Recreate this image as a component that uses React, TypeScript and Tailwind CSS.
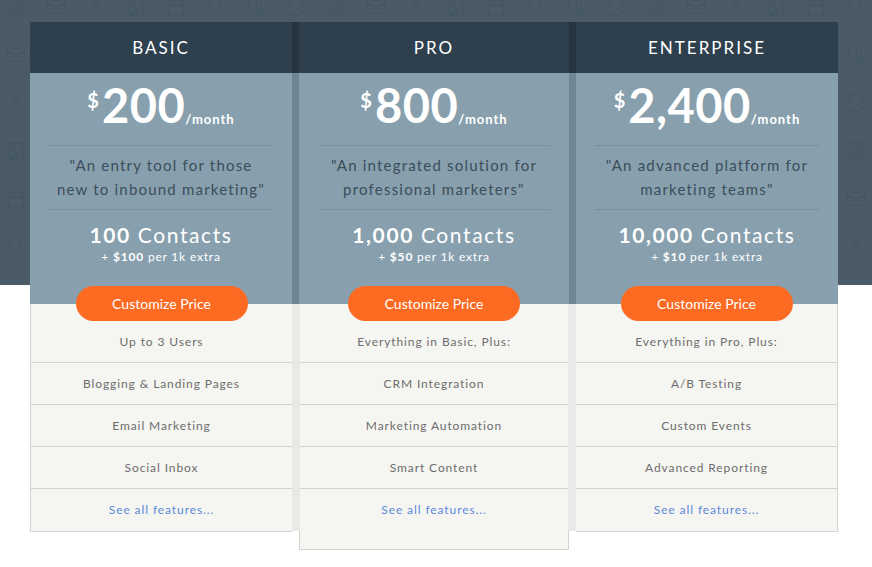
import React from 'react';
import { Mail, Calendar, BarChart3, FileText, User, Search, MessageCircle, Image } from 'lucide-react';

type Plan = {
  name: string;
  price: string;
  quote: [string, string];
  contacts: string;
  extra: string;
  features: string[];
};

const plans: Plan[] = [
  {
    name: 'BASIC',
    price: '200',
    quote: ['"An entry tool for those', 'new to inbound marketing"'],
    contacts: '100',
    extra: '$100',
    features: ['Up to 3 Users', 'Blogging & Landing Pages', 'Email Marketing', 'Social Inbox'],
  },
  {
    name: 'PRO',
    price: '800',
    quote: ['"An integrated solution for', 'professional marketers"'],
    contacts: '1,000',
    extra: '$50',
    features: ['Everything in Basic, Plus:', 'CRM Integration', 'Marketing Automation', 'Smart Content'],
  },
  {
    name: 'ENTERPRISE',
    price: '2,400',
    quote: ['"An advanced platform for', 'marketing teams"'],
    contacts: '10,000',
    extra: '$10',
    features: ['Everything in Pro, Plus:', 'A/B Testing', 'Custom Events', 'Advanced Reporting'],
  },
];

const patternIcons = [FileText, Mail, User, Image, Calendar, Search, BarChart3, MessageCircle];

// faint icon wallpaper behind the cards
const Pattern: React.FC = () => (
  <div className="absolute inset-x-0 top-0 h-[285px] overflow-hidden bg-[#4a5b67]">
    <div className="-mt-[6px] -ml-[4px] grid grid-cols-[repeat(22,40px)] gap-y-[22px]">
      {Array.from({ length: 22 * 7 }).map((_, i) => {
        const Icon = patternIcons[(i + Math.floor(i / 22) * 3) % patternIcons.length];
        return (
          <div key={i} className="flex h-[26px] w-[40px] items-center justify-center">
            <Icon className="h-[20px] w-[20px] text-[#455663]" strokeWidth={1.6} />
          </div>
        );
      })}
    </div>
  </div>
);

const PlanCard: React.FC<{ plan: Plan; featured?: boolean; side: 'left' | 'right' | 'none' }> = ({
  plan,
  featured,
  side,
}) => {
  const border = featured
    ? 'border-x border-b border-[#d2d2ce]'
    : side === 'left'
      ? 'border-l border-b border-[#d2d2ce]'
      : 'border-r border-b border-[#d2d2ce]';

  return (
    <div className={featured ? 'relative z-10 w-[270px]' : 'w-[262px]'}>
      {/* header */}
      <div
        className={`flex h-[51px] items-center justify-center bg-[#2e3f4e] ${
          featured ? 'shadow-[-7px_0_0_#26343f,7px_0_0_#26343f]' : ''
        }`}
      >
        <span className="text-[17px] tracking-[2px] text-white">{plan.name}</span>
      </div>

      {/* price block */}
      <div
        className={`flex h-[231px] flex-col bg-[#88a0ae] px-[19px] ${
          featured ? 'shadow-[-7px_0_0_#6e8594,7px_0_0_#6e8594]' : ''
        }`}
      >
        <div className="flex justify-center pt-[9px] text-white">
          <span className="mt-[8px] mr-[3px] text-[20px] font-bold leading-none">$</span>
          <span className="text-[47px] font-bold leading-none tracking-[0.5px]">{plan.price}</span>
          <span className="mt-[31px] text-[13px] font-bold leading-none tracking-[1px]">/month</span>
        </div>
        <div className="mt-[16px] h-px bg-[#7890a0]" />
        <div className="pt-[7px] pb-[8px] text-center text-[15px] leading-[24px] tracking-[1.2px] text-[#3c4d5a]">
          <div>{plan.quote[0]}</div>
          <div>{plan.quote[1]}</div>
        </div>
        <div className="h-px bg-[#7890a0]" />
        <div className="pt-[13px] text-center text-white">
          <div className="text-[21px] leading-[24px] tracking-[1.6px]">
            <span className="font-bold">{plan.contacts}</span> Contacts
          </div>
          <div className="mt-[3px] text-[12px] leading-[14px] tracking-[0.8px]">
            + <span className="font-bold">{plan.extra}</span> per 1k extra
          </div>
        </div>
      </div>

      {/* features */}
      <div className={`bg-[#f5f5f2] ${border}`}>
        <div className={featured ? 'shadow-[-8px_0_0_#e9e9e7,8px_0_0_#e9e9e7]' : ''}>
          <div className="flex justify-center">
            <button className="-mt-[18px] h-[35px] w-[172px] rounded-full bg-[#fd6a22] text-[14px] text-white">
              Customize Price
            </button>
          </div>
          {plan.features.map((f) => (
            <div
              key={f}
              className="flex h-[42px] items-center justify-center border-b border-[#d2d2ce] text-[12px] tracking-[0.9px] text-[#6d6d6d]"
            >
              {f}
            </div>
          ))}
          <div className="flex h-[42px] items-center justify-center text-[12px] tracking-[0.9px] text-[#5d89da]">
            See all features...
          </div>
        </div>
        {featured && <div className="h-[18px]" />}
      </div>
    </div>
  );
};

const App: React.FC = () => {
  return (
    <div className="relative h-[567px] w-[872px] overflow-hidden bg-white font-['Lato',sans-serif]">
      <Pattern />
      <div className="relative flex items-start gap-[7px] pt-[22px] pl-[30px]">
        <PlanCard plan={plans[0]} side="left" />
        <PlanCard plan={plans[1]} side="none" featured />
        <PlanCard plan={plans[2]} side="right" />
      </div>
    </div>
  );
};

export default App;
